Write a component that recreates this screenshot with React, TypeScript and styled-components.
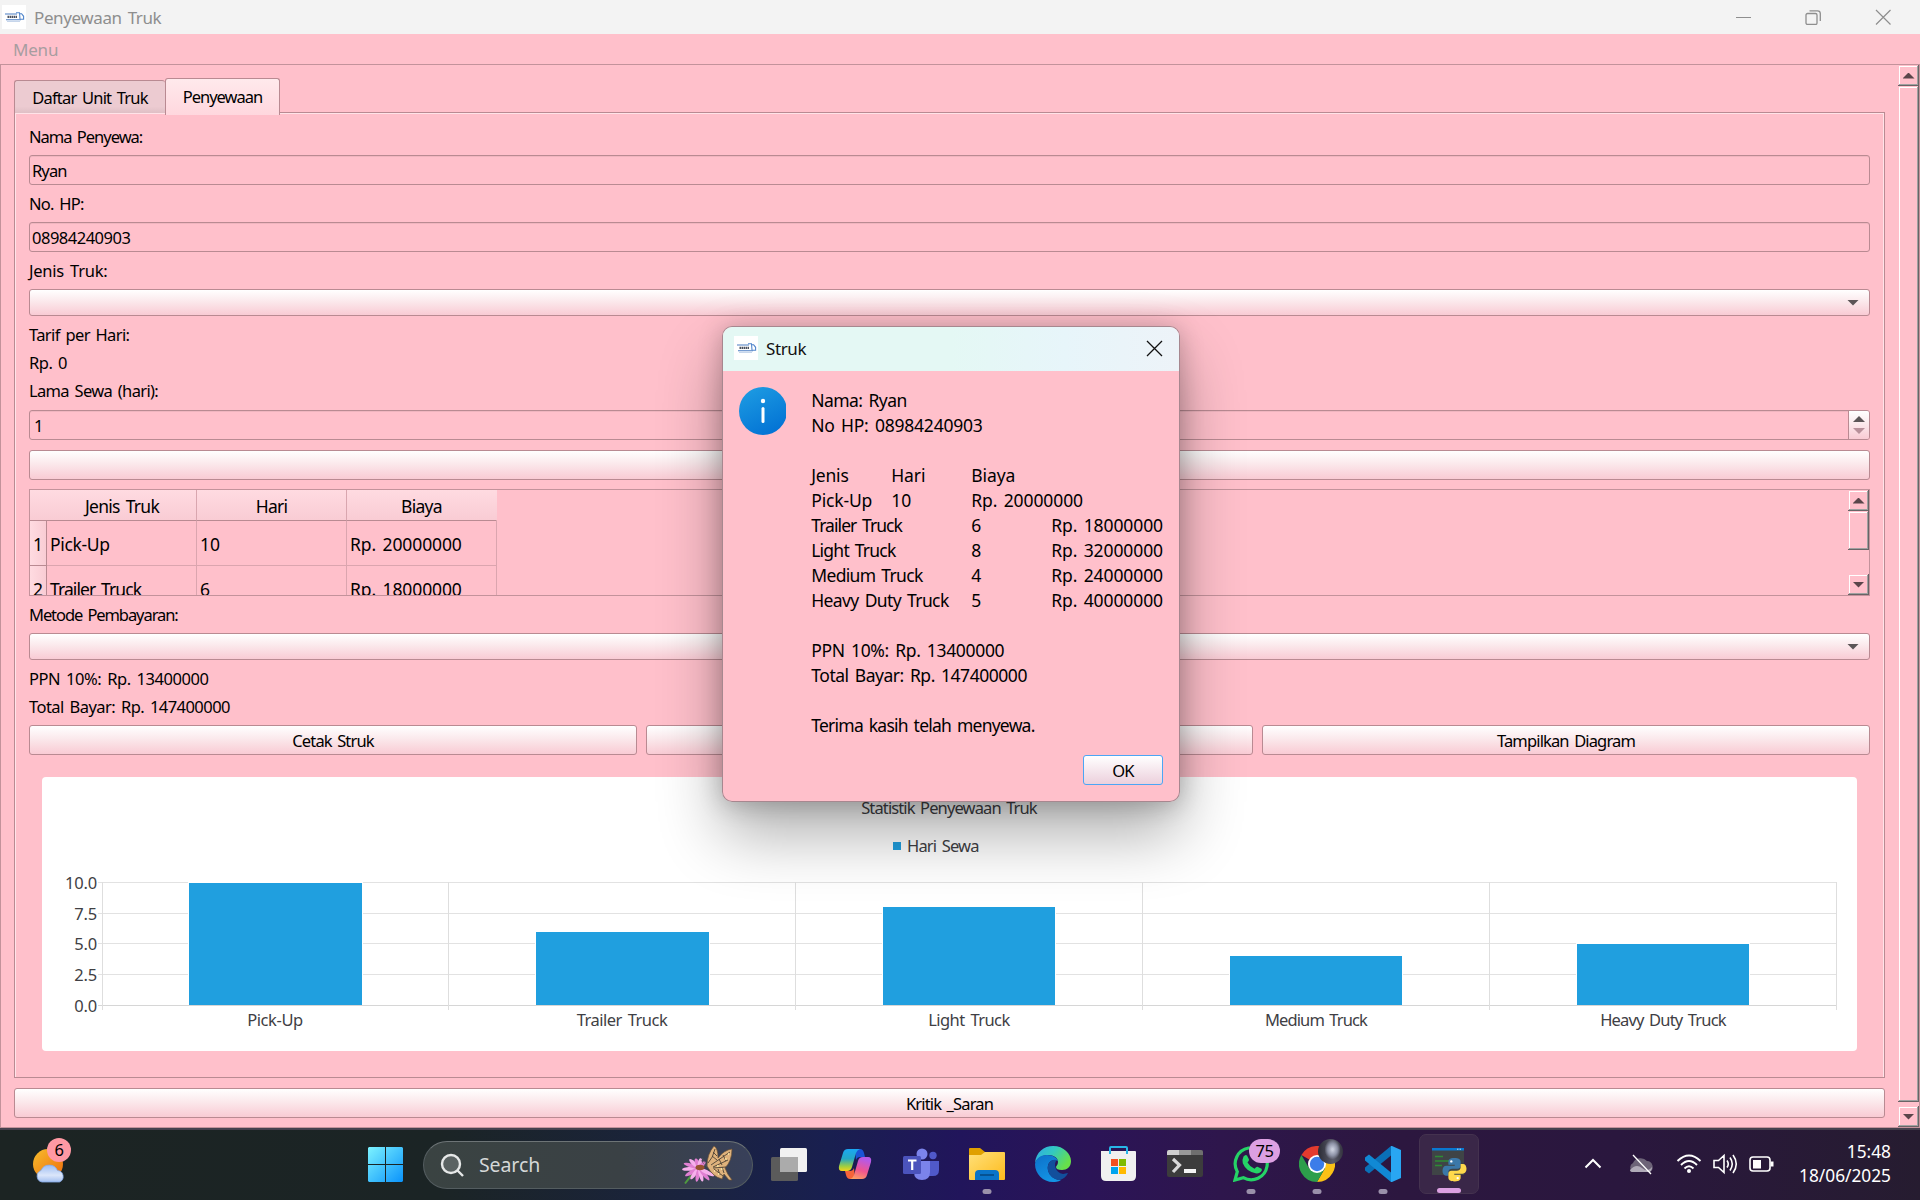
import React from "react";
import styled, { createGlobalStyle, css } from "styled-components";

const Global = createGlobalStyle`
  * { box-sizing: border-box; }
  html, body { margin: 0; padding: 0; }
  body { width: 1920px; height: 1200px; overflow: hidden; background: #ffc0cb;
    font-family: "Noto Sans", "Open Sans", sans-serif; font-size: 16.5px; color: #000; }
`;

const edge = "#b98a92";
const sheen = "linear-gradient(#ffffff, #fbe9ec 45%, #f9cbd4)";

const Desktop = styled.div`
  position: relative;
  width: 1920px;
  height: 1200px;
  display: flex;
  flex-direction: column;
  letter-spacing: -0.5px;
  word-spacing: 2px;
  white-space: pre;
`;
const TitleBar = styled.header`
  height: 34px;
  background: #f3f3f3;
  display: flex;
  align-items: center;
  padding-left: 2px;
  color: #8e8e8e;
`;
const TitleText = styled.span<{ $dark?: boolean }>`
  font-size: 17px;
  letter-spacing: -0.4px;
  margin-left: 8px;
  flex: 1;
  color: ${(p) => (p.$dark ? "#111" : "#8e8e8e")};
`;
const Caption = styled.svg`
  width: 16px;
  height: 16px;
  fill: none;
  stroke: #8e8e8e;
`;
const CaptionGroup = styled.div`
  display: flex;
  gap: 54px;
  padding-right: 29px;
`;
const MenuBar = styled.nav`
  height: 30px;
  padding-left: 13px;
  line-height: 31px;
  font-size: 17px;
  letter-spacing: -0.2px;
  color: #a79da0;
`;
const Frame = styled.main`
  height: 1064px;
  border: 1px solid #c3929b;
  display: flex;
`;
const Content = styled.div`
  width: 1897px;
  padding: 13px 13px 0 13px;
  display: flex;
  flex-direction: column;
`;
const Tabs = styled.div`
  display: flex;
  align-items: flex-end;
  height: 37px;
  margin-bottom: -3px;
  position: relative;
  z-index: 1;
`;
const Tab = styled.div<{ $active?: boolean }>`
  border: 1px solid ${edge};
  border-bottom: none;
  border-radius: 3px 3px 0 0;
  text-align: center;
  ${(p) =>
    p.$active
      ? css`
          width: 115px;
          height: 37px;
          line-height: 36px;
          letter-spacing: -1px;
          background: linear-gradient(#ffe9ec, #ffd7de);
        `
      : css`
          width: 151px;
          height: 33px;
          line-height: 34px;
          margin-bottom: 2px;
          border-right: none;
          letter-spacing: -0.8px;
          background: linear-gradient(#eccbd1 80%, #dfbfc5);
        `}
`;
const Panel = styled.section`
  height: 966px;
  border: 1px solid ${edge};
  box-shadow: inset 1px 1px #ffe3e8, inset -1px 0 #ffe3e8;
  padding: 10px 14px 0;
`;
const Label = styled.div<{ $ls?: number }>`
  height: 28px;
  line-height: 28px;
  letter-spacing: ${(p) => p.$ls ?? -0.5}px;
`;
const Field = styled.div<{ $top?: number; $pad?: number; $ls?: number }>`
  height: 30px;
  margin: ${(p) => p.$top ?? 4}px 0 5px;
  border: 1px solid ${edge};
  border-radius: 3px;
  box-shadow: inset 0 1px #f0b5bf;
  padding-left: ${(p) => p.$pad ?? 2}px;
  line-height: 29px;
  letter-spacing: ${(p) => p.$ls ?? -0.5}px;
  display: flex;
  justify-content: space-between;
`;
const Spinner = styled.div`
  width: 21px;
  border-left: 1px solid ${edge};
  background: ${sheen};
  border-radius: 0 2px 2px 0;
  display: flex;
  flex-direction: column;
  align-items: center;
  justify-content: center;
  gap: 6px;
`;
const Arrow = styled.i<{ $up?: boolean; $faded?: boolean; $dark?: boolean }>`
  width: 12px;
  height: 6px;
  background: ${(p) => (p.$faded ? "#b8909a" : p.$dark ? "#5a454a" : "#5c5557")};
  clip-path: ${(p) => (p.$up ? "polygon(50% 0, 100% 100%, 0 100%)" : "polygon(0 0, 100% 0, 50% 100%)")};
`;
const Combo = styled.div`
  height: 27px;
  margin: 4px 0 5px;
  border: 1px solid ${edge};
  border-radius: 3px;
  background: ${sheen};
  display: flex;
  align-items: center;
  justify-content: flex-end;
  padding-right: 10px;
`;
const Button = styled.button<{ $mt?: number; $focus?: boolean }>`
  width: 100%;
  height: 30px;
  margin: ${(p) => p.$mt ?? 0}px 0 0;
  padding: 1px 0 0;
  border: 1px solid ${(p) => (p.$focus ? "#4ba6f5" : edge)};
  border-radius: 3px;
  background: ${(p) => (p.$focus ? "linear-gradient(#fff, #ecd0dc)" : sheen)};
  font: inherit;
  letter-spacing: -0.86px;
  word-spacing: 2px;
  color: #000;
  display: block;
`;
const TableBox = styled.div`
  height: 107px;
  margin: 9px 0 5px;
  border: 1px solid #c3929b;
  display: flex;
  justify-content: space-between;
  overflow: hidden;
  font-size: 17.5px;
  letter-spacing: -0.1px;
`;
const Grid = styled.div`
  display: grid;
  grid-template-columns: 17px 150px 150px 150px;
  grid-template-rows: 31px 45px 45px;
`;
const Head = styled.div<{ $last?: boolean }>`
  background: linear-gradient(#ffdbe1, #f9ccd4);
  border-bottom: 1px solid ${edge};
  border-right: 1px solid ${(p) => (p.$last ? "transparent" : "#d9a6af")};
  text-align: center;
  line-height: 33px;
  letter-spacing: -0.7px;
`;
const HeadFirst = styled(Head)`
  grid-column: span 2;
  padding-left: 18px;
`;
const RowNo = styled.div`
  background: linear-gradient(90deg, #ffdbe1, #f9ccd4);
  border-right: 1px solid ${edge};
  border-bottom: 1px solid ${edge};
  text-align: center;
  line-height: 47px;
`;
const Cell = styled.div<{ $ls?: number }>`
  border-right: 1px solid #dba5af;
  border-bottom: 1px solid #dba5af;
  padding-left: 3px;
  line-height: 47px;
  letter-spacing: ${(p) => p.$ls ?? -0.1}px;
`;
const ScrollBar = styled.div`
  width: 21px;
  display: flex;
  flex-direction: column;
`;
const Raised = styled.div<{ $h: number; $mt?: number }>`
  height: ${(p) => p.$h}px;
  margin-top: ${(p) => p.$mt ?? 0}px;
  display: flex;
  align-items: center;
  justify-content: center;
  box-shadow: inset -1px -1px #696466, inset 1px 1px #ffc0cb, inset -2px -2px #a0a0a0, inset 2px 2px #fff;
`;
const ButtonRow = styled.div`
  display: grid;
  grid-template-columns: 608px 607px 608px;
  gap: 9px;
  margin-top: 4px;
`;
const ChartCard = styled.div`
  margin: 22px 13px 0;
  height: 274px;
  width: 1815px;
  background: #fff;
  border-radius: 4px;
`;
const ChartSvg = styled.svg`
  display: block;
  font-size: 16.5px;
  fill: #404044;
`;

/* dialog */
const Dialog = styled.div`
  position: absolute;
  left: 722px;
  top: 326px;
  width: 458px;
  height: 476px;
  border: 1px solid rgba(120, 105, 110, 0.65);
  border-radius: 10px;
  overflow: hidden;
  background: #ffc0cb;
  letter-spacing: -0.1px;
`;
const DialogShadow = styled.div`
  position: absolute;
  left: 722px;
  top: 326px;
  width: 458px;
  height: 476px;
  border-radius: 10px;
  box-shadow: 0 32px 64px rgba(0, 0, 0, 0.32), 0 2px 24px rgba(0, 0, 0, 0.22);
`;
const DialogTitle = styled.div`
  height: 44px;
  background: linear-gradient(90deg, #e4f8f4 50%, #e7f5fa 75%, #edf3f8);
  display: flex;
  align-items: center;
  padding: 0 16px 2px 11px;
`;
const DialogBody = styled.div`
  display: flex;
  padding: 16px 16px 0;
`;
const Receipt = styled.div`
  margin-left: 25px;
  margin-top: 1px;
  font-size: 17.5px;
  line-height: 25px;
`;
const ReceiptRow = styled.div<{ $cols?: string; $ls?: number }>`
  display: grid;
  grid-template-columns: ${(p) => p.$cols ?? "auto"};
  height: 25px;

  & > span:first-child {
    letter-spacing: ${(p) => p.$ls ?? -0.1}px;
  }
`;
const DialogActions = styled.div`
  width: 80px;
  margin: 17px 16px 0 auto;
`;

/* taskbar */
const Taskbar = styled.footer`
  height: 72px;
  border-top: 2px solid #45404d;
  padding-bottom: 2px;
  background: linear-gradient(90deg, #1c2423 0, #1b2425 440px, #1a2340 700px, #191f50 830px, #21155b 960px, #2b1457 1090px, #2e164c 1220px, #2c173f 1400px, #2a173e 1620px, #261c30 1920px);
  display: flex;
  align-items: center;
  letter-spacing: 0;
`;
const Weather = styled.div`
  position: relative;
  width: 34px;
  height: 46px;
  margin: 0 301px 6px 33px;
`;
const Search = styled.div`
  width: 330px;
  height: 48px;
  margin: 1px 3px 0 20px;
  border: 1px solid #545d60;
  border-top-color: #6d7476;
  border-radius: 24px;
  background: linear-gradient(90deg, #3a4342, #3a4145 60%, #38405a);
  display: flex;
  align-items: center;
  padding: 0 18px 0 16px;
`;
const SearchText = styled.span`
  flex: 1;
  margin-left: 15px;
  font-size: 19.5px;
  letter-spacing: -0.1px;
  color: #d5d8d8;
`;
const AppSlot = styled.div<{ $active?: boolean }>`
  position: relative;
  width: 60px;
  height: 60px;
  margin: 0 3px;
  border-radius: 7px;
  display: flex;
  align-items: center;
  justify-content: center;
  ${(p) => p.$active && "background:#3a2748;border:1px solid #44324f;"}
`;
const Running = styled.i<{ $active?: boolean }>`
  position: absolute;
  bottom: 0;
  left: 50%;
  width: ${(p) => (p.$active ? 24 : 9)}px;
  height: 5px;
  transform: translateX(-50%);
  border-radius: 3px;
  background: ${(p) => (p.$active ? "#dca0e2" : "#9a90aa")};
`;
const Badge = styled.span<{ $x: number; $y: number; $w: number; $bg: string }>`
  position: absolute;
  left: ${(p) => p.$x}px;
  top: ${(p) => p.$y}px;
  width: ${(p) => p.$w}px;
  height: 24px;
  border-radius: 12px;
  background: ${(p) => p.$bg};
  color: #000;
  font-size: 16.5px;
  line-height: 24px;
  text-align: center;
  letter-spacing: -0.5px;
`;
const Tray = styled.div`
  margin-left: auto;
  display: flex;
  align-items: center;
`;
const TrayIcon = styled.svg<{ $ml: number }>`
  width: 26px;
  height: 24px;
  margin-left: ${(p) => p.$ml}px;
  fill: none;
  stroke: #fff;
  stroke-width: 1.6;
`;
const Clock = styled.div`
  width: 112px;
  margin: 0 29px 0 5px;
  text-align: right;
  font-size: 17.3px;
  line-height: 24px;
  letter-spacing: 0;
  color: #fff;
`;

const TruckLogo = () => (
  <svg width="24" height="24">
    <rect width="24" height="24" fill="#fff" />
    <path d="M3 9h12M4 14.800h15" stroke="#4a7cc2" strokeWidth="1.100" />
    <path d="M5 16.500h13" stroke="#b9cbe6" strokeWidth=".8" />
    <path d="M14 7.700h3.500l.5 6.500M18 8.700h1.600l2 2.600v3h-3" fill="none" stroke="#5085cb" strokeWidth="1.100" />
    <path d="M5.500 11.800h9.500" stroke="#4b515e" strokeWidth="2.200" strokeDasharray="1.500 .5" />
  </svg>
);

const data = [
  { name: "Pick-Up", days: 10, ls: -0.4 },
  { name: "Trailer Truck", days: 6, ls: -0.5 },
  { name: "Light Truck", days: 8, ls: -0.55 },
  { name: "Medium Truck", days: 4, ls: -0.9 },
  { name: "Heavy Duty Truck", days: 5, ls: -0.83 },
];

const Chart = () => {
  const x0 = 60.5, step = 346.8;
  return (
    <ChartSvg width="1815" height="274">
      <text x="907" y="37" textAnchor="middle" letterSpacing="-0.88">Statistik Penyewaan Truk</text>
      <rect x="851" y="65" width="8" height="8" fill="#209fdf" />
      <text x="865" y="75" letterSpacing="-0.83">Hari Sewa</text>
      {["10.0", "7.5", "5.0", "2.5", "0.0"].map((t, i) => {
        const y = [105.5, 136.5, 166.5, 197.5, 228.5][i];
        return (
          <g key={t}>
            <path d={`M56 ${y}H1794`} stroke={i === 4 ? "#d6d6d6" : "#e2e2e2"} />
            <text x="55" y={y + 6.5} textAnchor="end" letterSpacing="-0.2">{t}</text>
          </g>
        );
      })}
      {[0, 1, 2, 3, 4, 5].map((i) => (
        <path key={i} d={`M${Math.round(x0 + i * step) - 0.5} 105V233`} stroke="#dedede" />
      ))}
      {data.map((d, i) => {
        const top = Math.round(228.4 - d.days * 12.24);
        const x = Math.round(147.1 + i * 346.93);
        const w = i < 2 ? 173 : 172;
        return (
          <g key={d.name}>
            <rect x={x - 1} y={top - 1} width={w + 2} height={229 - top} fill="#fff" />
            <rect x={x} y={top} width={w} height={228 - top} fill="#209fdf" />
            <text x={x + 86} y="249" textAnchor="middle" letterSpacing={d.ls}>{d.name}</text>
          </g>
        );
      })}
    </ChartSvg>
  );
};

const near = "80px 80px auto";
const far = "160px 80px auto";

const WeatherIcon = () => (
  <svg width="34" height="46">
    <defs>
      <linearGradient id="sun" x1="0" y1="0" x2="1" y2="1"><stop stopColor="#f7bd2c" /><stop offset="1" stopColor="#ee6b0c" /></linearGradient>
      <linearGradient id="cl" x1="0" y1="0" x2="0" y2="1"><stop stopColor="#9dbdf2" /><stop offset=".6" stopColor="#dbe6fa" /><stop offset="1" stopColor="#a4c0f0" /></linearGradient>
    </defs>
    <circle cx="15" cy="26" r="15" fill="url(#sun)" />
    <path d="M9 44a6 6 0 0 1-1-11.500a9 9 0 0 1 16.500 0a6 6 0 0 1 2 11.500z" fill="url(#cl)" stroke="#86a9e6" strokeWidth=".8" />
  </svg>
);
const StartIcon = () => (
  <svg width="35" height="35">
    <defs><linearGradient id="win" gradientUnits="userSpaceOnUse" x1="0" y1="0" x2="35" y2="35"><stop stopColor="#7df3ff" /><stop offset="1" stopColor="#0a93fb" /></linearGradient></defs>
    <path d="M1 0H17V17H0V1zM18 0H34L35 1V17H18zM0 18H17V35H1L0 34zM18 18H35V34L34 35H18z" fill="url(#win)" />
  </svg>
);
const petals: [number, number, number][] = [
  [175, 17, 0], [197, 16, 1], [222, 13, 0], [250, 10, 1], [280, 10, 0], [315, 9, 1],
  [150, 16, 1], [127, 14, 0], [100, 14, 1], [75, 14, 0], [50, 16, 1], [28, 17, 0],
];
const Flower = () => (
  <svg width="54" height="38" viewBox="0 0 54 38">
    <path d="M13 28Q9 32 5 37.500" stroke="#4f9a3f" strokeWidth="1.900" fill="none" />
    {petals.map(([a, len, tone]) => (
      <ellipse key={a} cx={19 + len / 2} cy="22" rx={len / 2} ry="2" fill={tone ? "#e07fd2" : "#f6b0ec"} transform={`rotate(${a} 19 22)`} />
    ))}
    <ellipse cx="20" cy="21.500" rx="4.500" ry="2.800" fill="#96522f" />
    <path d="M27 20Q27 8 34 0Q38 2 38 12Q44 4 52 3Q52 15 45 22Q47 28 52 34L49 34L44 28L42 33Q33 31 27 20z" fill="#dfb27c" stroke="#6b5135" strokeWidth=".7" />
    <path d="M28 17Q33 12 35 3M31 19L50 6M33 21L48 14M33 22L46 21M34 23L43 30M33 6l4 4M32 10l5 4M43 9l3 6M39 13l3 6M38 23l2 6M42 21l2 6" stroke="#4d4234" strokeWidth=".9" fill="none" />
    <path d="M34 25h1M37 20h1.500M41 23h1.500M45 13h1.500M38 28h1.500M48 8h1" stroke="#fff1a8" strokeWidth="1.700" />
    <path d="M27 20Q25 16 22 12M27 21Q23 18 21 14" stroke="#555" fill="none" strokeWidth=".6" />
  </svg>
);
const TaskView = () => (
  <svg width="36" height="34">
    <rect y="10" width="27" height="24" rx="1.500" fill="#5b5b5b" />
    <rect x="9" y="1" width="27" height="24" rx="1.500" fill="#f1f1f1" />
    <path d="M9 10h18v15H9z" fill="#ababab" />
  </svg>
);
const Copilot = () => (
  <svg width="34" height="32" viewBox="0 0 34 32">
    <defs>
      <linearGradient id="c1" x1="0" y1="0" x2="0" y2="1"><stop stopColor="#1ba7f3" /><stop offset=".45" stopColor="#24a7c4" /><stop offset=".8" stopColor="#a3cf3e" /><stop offset="1" stopColor="#f6d21b" /></linearGradient>
      <linearGradient id="c2" x1=".3" y1="0" x2="0" y2="1"><stop stopColor="#b659e6" /><stop offset=".5" stopColor="#ef5590" /><stop offset="1" stopColor="#fdaa5b" /></linearGradient>
    </defs>
    <path d="M17 1h5q3 0 4 4l1 4h-5q-3 0-4 3z" fill="#1a54d6" />
    <path d="M17 31h-5q-3 0-4-4l-1-4h5q3 0 4-3z" fill="#f5643a" />
    <path d="M10 1h12q-3 1-4 4l-4 14q-1 4-5 4H4q-4 0-3-5L5 5q1-4 5-4z" fill="url(#c1)" />
    <path d="M24 31H12q3-1 4-4l4-14q1-4 5-4h5q4 0 3 5l-4 13q-1 4-5 4z" fill="url(#c2)" />
  </svg>
);
const Teams = () => (
  <svg width="36" height="34" viewBox="0 0 36 34">
    <circle cx="19" cy="7" r="5.500" fill="#7b83eb" /><circle cx="30" cy="8.500" r="3.700" fill="#5059c9" />
    <path d="M25 14h11v9q0 6-6 6h-5z" fill="#5059c9" />
    <path d="M11 14h16v11q0 8-8 8t-8-8z" fill="#7b83eb" />
    <rect y="9" width="18" height="18" rx="1.500" fill="#4b53bc" />
    <path d="M5 13.500h8.500M9.200 13.500V23" stroke="#fff" strokeWidth="2.200" />
  </svg>
);
const Folder = () => (
  <svg width="36" height="34" viewBox="0 0 36 34">
    <defs><linearGradient id="fo" x1="0" y1="0" x2="1" y2="1"><stop stopColor="#ffe07a" /><stop offset="1" stopColor="#fdbb1c" /></linearGradient></defs>
    <path d="M0 2q0-1 1-1h10l5 4v8H0z" fill="#e0a000" />
    <path d="M0 8h12l4-3h19q1 0 1 1v26q0 1-1 1H1q-1 0-1-1z" fill="url(#fo)" />
    <path d="M6 33v-6q0-4 4-4h16q4 0 4 4v6z" fill="#0a74c9" /><path d="M11 28h14" stroke="#064e8c" strokeWidth="1.800" />
  </svg>
);
const Edge = () => (
  <svg width="36" height="36" viewBox="0 0 36 36">
    <defs>
      <linearGradient id="e1" x1="0" y1="0" x2="1" y2=".5"><stop stopColor="#2fa9e8" /><stop offset=".5" stopColor="#33c9c0" /><stop offset="1" stopColor="#67e04a" /></linearGradient>
      <linearGradient id="e2" x1="0" y1="0" x2=".5" y2="1"><stop stopColor="#0d70c9" /><stop offset="1" stopColor="#1394e4" /></linearGradient>
    </defs>
    <path d="M0 17C1 6 9 0 18 0c11 0 18 8 18 15 0 6-4 9-9 9-4 0-6-1-6-3 0-1 2-2 2-5 0-4-4-7-10-7C6 9 2 13 0 17z" fill="url(#e1)" />
    <path d="M0 18C1 12 6 9 12 9c6 0 10 3 11 6-3-2-7-1-9 2-4 7 2 17 12 17-3 2-6 2-8 2C8 36 0 28 0 18z" fill="url(#e2)" />
    <path d="M14 17c2-3 5-4 8-3-4 3-2 13 6 14 2 0 3-1 5-1-2 4-5 6-8 7-9 0-15-10-11-17z" fill="#124f9c" />
  </svg>
);
const Store = () => (
  <svg width="36" height="36" viewBox="0 0 36 36">
    <path d="M0 5q0 0 1 0h33q1 0 1 1v24q0 5-5 5H5q-5 0-5-5z" fill="#f0f0f0" />
    <path d="M9 8V2q0-1 1-1h15q1 0 1 1v6" fill="none" stroke="#28b6e8" strokeWidth="2" />
    <path d="M10 13h7v7h-7z" fill="#f25022" /><path d="M18 13h7v7h-7z" fill="#7fba00" />
    <path d="M10 21h7v7h-7z" fill="#00a4ef" /><path d="M18 21h7v7h-7z" fill="#ffb900" />
  </svg>
);
const Terminal = () => (
  <svg width="36" height="28" viewBox="0 0 36 28">
    <rect width="36" height="27" rx="2" fill="#3c3c3c" />
    <path d="M0 5V2q0-2 2-2h10v5z" fill="#cfcfcf" /><path d="M12 0h12v5H12z" fill="#999" /><path d="M24 0h10q2 0 2 2v3H24z" fill="#6f6f6f" />
    <path d="M6 9l6.500 6L6 22" fill="none" stroke="#d9d9d9" strokeWidth="3.200" /><path d="M17 19h12v4H17z" fill="#f4f4f4" />
  </svg>
);
const WhatsApp = () => (
  <svg width="36" height="36" viewBox="0 0 36 36">
    <path d="M2 34l2.300-8.300A16 16 0 1 1 10.300 31.700z" fill="none" stroke="#25d366" strokeWidth="3.200" />
    <path d="M10.500 10.500q2-2.500 3.500-1l2 4q.4 1-1.500 3 2.500 4.500 7 6.300 2-2.500 3-2.100l4 2q1.200.8-.5 3-2.200 2.300-5.500 1.600-9.500-2-12.700-10-.9-3.500.7-6.800z" fill="#25d366" />
  </svg>
);
const Chrome = () => (
  <svg width="36" height="36" viewBox="0 0 36 36">
    <path d="M18 18L2.400 9A18 18 0 0 1 33.600 9z" fill="#e33b2e" />
    <path d="M18 9H33.600A18 18 0 0 1 18 36L25.800 22.500z" fill="#fbc116" />
    <path d="M10.200 22.500L2.400 9A18 18 0 0 0 18 36L25.800 22.500z" fill="#2d9e4b" />
    <circle cx="18" cy="18" r="9" fill="#fff" /><circle cx="18" cy="18" r="7.200" fill="#3b7de9" />
  </svg>
);
const Avatar = styled.i`
  position: absolute;
  left: 31px;
  top: 5px;
  width: 25px;
  height: 25px;
  border-radius: 50%;
  background: radial-gradient(ellipse 8px 10px at 58% 42%, #c8cddb 10%, #8f94a8 60%, transparent 100%), linear-gradient(90deg, #2a2b35, #5b5c6a 60%, #34343f);
`;
const VsCode = () => (
  <svg width="36" height="36" viewBox="0 0 36 36">
    <path d="M26 9.500L4 27.500 0 24.500v-3L26 0z" fill="#0a70b8" />
    <path d="M26 26.500L4 8.500 0 11.500v3L26 36z" fill="#1189d4" />
    <path d="M26 0h1l9 4v28l-9 4h-1z" fill="#29a6f2" />
  </svg>
);
const Python = () => (
  <svg width="36" height="36" viewBox="0 0 36 36">
    <rect x="1" y="2" width="32" height="27" fill="#3f4446" /><path d="M1 2h32v2.500H1z" fill="#0a78d0" />
    <path d="M26 3.200h5" stroke="#bfe0f8" strokeDasharray="1.500 1" />
    <path d="M4 10.500h8M4 15h14M4 19.500h7" stroke="#2e8b34" strokeWidth="1.300" />
    <g transform="translate(11.500 12) scale(.98)">
      <path d="M12 0C7 0 6 2 6 4v3h6.500v1H4C1.500 8 0 10 0 13s1.500 5 3.500 5H6v-3.500C6 12 8 11 10 11h5.500c2 0 3-1.500 3-3V4c0-2.500-2-4-6.500-4z" fill="#3b78a9" />
      <path d="M12.500 24c5 0 6-2 6-4v-3H12v-1h8.500c2.500 0 4-2 4-5s-1.500-5-3.500-5h-2.500v3.500c0 2.500-2 3.500-4 3.500H9c-2 0-3 1.500-3 3v4c0 2.500 2 4 6.500 4z" fill="#ffd94c" />
      <circle cx="9" cy="3.500" r="1.200" fill="#fff" /><circle cx="15.500" cy="20.500" r="1.200" fill="#fff" />
    </g>
  </svg>
);

export default function App() {
  return (
    <Desktop>
      <Global />
      <TitleBar>
        <TruckLogo />
        <TitleText>Penyewaan Truk</TitleText>
        <CaptionGroup>
          <Caption><path d="M1 8.500h15" /></Caption>
          <Caption><rect x="1" y="4.500" width="11" height="11" rx="1.500" strokeWidth="1.300" /><path d="M4.500 1.800h8q2.800 0 2.800 2.800v7.500" strokeWidth="1.300" /></Caption>
          <Caption><path d="M1 1l14.500 14.500M15.500 1L1 15.500" strokeWidth="1.200" /></Caption>
        </CaptionGroup>
      </TitleBar>
      <MenuBar>Menu</MenuBar>
      <Frame>
        <Content>
          <Tabs>
            <Tab>Daftar Unit Truk</Tab>
            <Tab $active>Penyewaan</Tab>
          </Tabs>
          <Panel>
            <Label $ls={-1}>Nama Penyewa:</Label>
            <Field $ls={-0.9}>Ryan</Field>
            <Label $ls={-0.75}>No. HP:</Label>
            <Field>08984240903</Field>
            <Label $ls={-0.24}>Jenis Truk:</Label>
            <Combo><Arrow /></Combo>
            <Label $ls={-0.62}>Tarif per Hari:</Label>
            <Label>Rp. 0</Label>
            <Label $ls={-0.66}>Lama Sewa (hari):</Label>
            <Field $top={5} $pad={4}>
              1
              <Spinner><Arrow $up /><Arrow $faded /></Spinner>
            </Field>
            <Button $mt={10} />
            <TableBox>
              <Grid>
                <HeadFirst>Jenis Truk</HeadFirst>
                <Head>Hari</Head>
                <Head $last>Biaya</Head>
                <RowNo>1</RowNo><Cell $ls={-0.35}>Pick-Up</Cell><Cell>10</Cell><Cell>Rp. 20000000</Cell>
                <RowNo>2</RowNo><Cell $ls={-0.9}>Trailer Truck</Cell><Cell>6</Cell><Cell>Rp. 18000000</Cell>
              </Grid>
              <ScrollBar>
                <Raised $h={21}><Arrow $up $dark /></Raised>
                <Raised $h={39} />
                <Raised $h={21} $mt={24}><Arrow $dark /></Raised>
              </ScrollBar>
            </TableBox>
            <Label $ls={-1.08}>Metode Pembayaran:</Label>
            <Combo><Arrow /></Combo>
            <Label $ls={-0.44}>PPN 10%: Rp. 13400000</Label>
            <Label $ls={-0.54}>Total Bayar: Rp. 147400000</Label>
            <ButtonRow>
              <Button>Cetak Struk</Button>
              <Button />
              <Button>Tampilkan Diagram</Button>
            </ButtonRow>
            <ChartCard><Chart /></ChartCard>
          </Panel>
          <Button $mt={10}>Kritik _Saran</Button>
        </Content>
        <ScrollBar>
          <Raised $h={21}><Arrow $up $dark /></Raised>
          <Raised $h={1016} />
          <Raised $h={21} $mt={4}><Arrow $dark /></Raised>
        </ScrollBar>
      </Frame>

      <Taskbar>
        <Weather>
          <WeatherIcon />
          <Badge $x={14} $y={0} $w={24} $bg="#ff99a4">6</Badge>
        </Weather>
        <StartIcon />
        <Search>
          <svg width="24" height="24" fill="none" stroke="#e6e8e8" strokeWidth="2.400"><circle cx="11" cy="11" r="9" fill="#5a6262" /><path d="M17 17l6 6" /></svg>
          <SearchText>Search</SearchText>
          <Flower />
        </Search>
        <AppSlot><TaskView /></AppSlot>
        <AppSlot><Copilot /></AppSlot>
        <AppSlot><Teams /></AppSlot>
        <AppSlot><Folder /><Running /></AppSlot>
        <AppSlot><Edge /></AppSlot>
        <AppSlot><Store /></AppSlot>
        <AppSlot><Terminal /></AppSlot>
        <AppSlot><WhatsApp /><Badge $x={28} $y={5} $w={31} $bg="#dca0e2">75</Badge><Running /></AppSlot>
        <AppSlot><Chrome /><Avatar /><Running /></AppSlot>
        <AppSlot><VsCode /><Running /></AppSlot>
        <AppSlot $active><Python /><Running $active /></AppSlot>
        <Tray>
          <TrayIcon $ml={0}><path d="M5.500 15.500L13 8l7.500 7.500" strokeWidth="2" /></TrayIcon>
          <TrayIcon $ml={22}><path d="M5 20a5 5 0 0 1 0-9 8 7 0 0 1 14-2 6 6 0 0 1 3 11z" fill="#6d6478" stroke="none" /><path d="M2 18q6-7 12-2t10-1q0 5-4 5H5q-3 0-3-2z" fill="#b0aab8" stroke="none" /><path d="M5 3l18 19" strokeWidth="1.300" /></TrayIcon>
          <TrayIcon $ml={22}><path d="M1.500 9q11.500-11 23 0M5 13q8-8 16 0M8.500 16.500q4.500-4.500 9 0" strokeWidth="1.900" /><circle cx="13" cy="19" r="2" fill="#fff" stroke="none" /></TrayIcon>
          <TrayIcon $ml={10}><path d="M2 8.500h4.500L12 3.500v17L6.500 15.500H2zM15 8.500q2.500 3.500 0 7M18 5.500q4.500 6.500 0 13M21 3q6.500 9 0 18" /></TrayIcon>
          <TrayIcon $ml={10}><rect x="2" y="5" width="20" height="14" rx="3" /><rect x="5" y="8" width="8" height="8.500" fill="#fff" stroke="none" /><path d="M24 9.500v5" strokeWidth="3" /></TrayIcon>
          <Clock>15:48<br />18/06/2025</Clock>
        </Tray>
      </Taskbar>

      <DialogShadow />
      <Dialog>
        <DialogTitle>
          <TruckLogo />
          <TitleText $dark>Struk</TitleText>
          <svg width="17" height="17"><path d="M1 1l15 15M16 1L1 16" stroke="#111" strokeWidth="1.300" /></svg>
        </DialogTitle>
        <DialogBody>
          <svg width="48" height="48">
            <defs><linearGradient id="inf" x1=".2" y1="0" x2=".7" y2="1"><stop stopColor="#1d9be2" /><stop offset="1" stopColor="#0272d4" /></linearGradient></defs>
            <circle cx="24" cy="24" r="24" fill="url(#inf)" />
            <circle cx="24" cy="14" r="2.200" fill="#fff" /><path d="M24 21.500v13" stroke="#fff" strokeWidth="3" strokeLinecap="round" />
          </svg>
          <Receipt>
            <ReceiptRow $ls={-0.54}><span>Nama: Ryan</span></ReceiptRow>
            <ReceiptRow $ls={-0.22}><span>No HP: 08984240903</span></ReceiptRow>
            <ReceiptRow />
            <ReceiptRow $cols={near} $ls={-0.2}><span>Jenis</span><span>Hari</span><span>Biaya</span></ReceiptRow>
            <ReceiptRow $cols={near} $ls={-0.15}><span>Pick-Up</span><span>10</span><span>Rp. 20000000</span></ReceiptRow>
            <ReceiptRow $cols={far} $ls={-0.93}><span>Trailer Truck</span><span>6</span><span>Rp. 18000000</span></ReceiptRow>
            <ReceiptRow $cols={far} $ls={-0.77}><span>Light Truck</span><span>8</span><span>Rp. 32000000</span></ReceiptRow>
            <ReceiptRow $cols={far} $ls={-0.66}><span>Medium Truck</span><span>4</span><span>Rp. 24000000</span></ReceiptRow>
            <ReceiptRow $cols={far} $ls={-0.6}><span>Heavy Duty Truck</span><span>5</span><span>Rp. 40000000</span></ReceiptRow>
            <ReceiptRow />
            <ReceiptRow $ls={-0.32}><span>PPN 10%: Rp. 13400000</span></ReceiptRow>
            <ReceiptRow $ls={-0.46}><span>Total Bayar: Rp. 147400000</span></ReceiptRow>
            <ReceiptRow />
            <ReceiptRow $ls={-0.76}><span>Terima kasih telah menyewa.</span></ReceiptRow>
          </Receipt>
        </DialogBody>
        <DialogActions><Button $focus>OK</Button></DialogActions>
      </Dialog>
    </Desktop>
  );
}
